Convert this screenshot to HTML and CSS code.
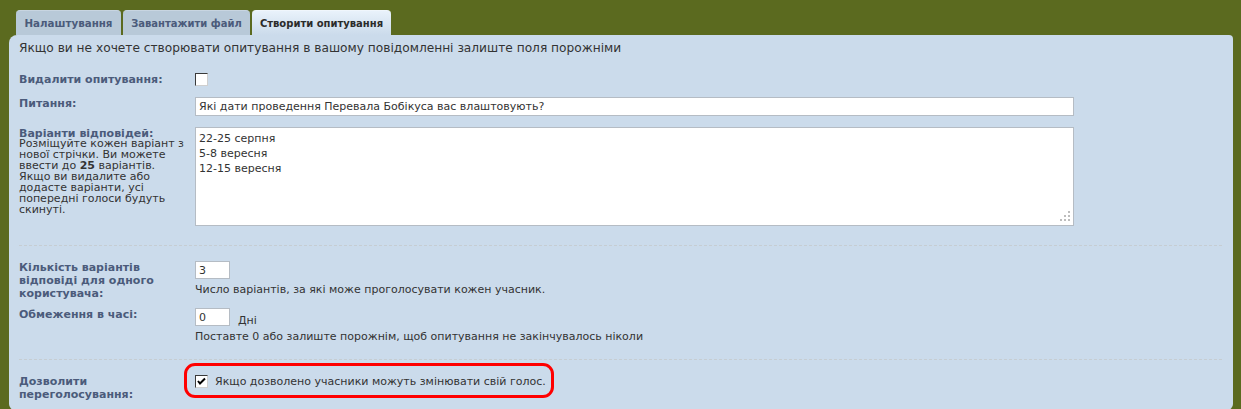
FILE: index.html
```html
<!DOCTYPE html>
<html lang="uk">
<head>
<meta charset="utf-8">
<title>Створити опитування</title>
<link rel="stylesheet" href="styles.css">
</head>
<body>
<div class="page">
  <nav class="tabs">
    <a class="tab t1">Налаштування</a>
    <a class="tab t2">Завантажити файл</a>
    <a class="tab t3 active">Створити опитування</a>
  </nav>
  <div class="panel">
    <p class="intro">Якщо ви не хочете створювати опитування в вашому повідомленні залиште поля порожніми</p>

    <div class="block first">
      <div class="row">
        <div class="label"><span class="ltext">Видалити опитування:</span></div>
        <div class="field"><span class="cb"></span></div>
      </div>
      <div class="row">
        <div class="label"><span class="ltext">Питання:</span></div>
        <div class="field"><input class="text wide" type="text" value="Які дати проведення Перевала Бобікуса вас влаштовують?"></div>
      </div>
      <div class="row">
        <div class="label">
          <span class="ltext">Варіанти відповідей:</span>
          <span class="explain">Розміщуйте кожен варіант з нової стрічки. Ви можете ввести до <b class="num">25</b> варіантів. Якщо ви видалите або додасте варіанти, усі попередні голоси будуть скинуті.</span>
        </div>
        <div class="field">
          <div class="ta-wrap">
            <textarea class="ta">22-25 серпня
5-8 вересня
12-15 вересня</textarea>
            <svg class="grip" width="11" height="11" viewBox="0 0 11 11"><g fill="#bdbdbd"><rect x="8" y="0" width="2" height="2"/><rect x="4" y="4" width="2" height="2"/><rect x="8" y="4" width="2" height="2"/><rect x="0" y="8" width="2" height="2"/><rect x="4" y="8" width="2" height="2"/><rect x="8" y="8" width="2" height="2"/></g></svg>
          </div>
        </div>
      </div>
    </div>

    <div class="block second">
      <div class="row">
        <div class="label"><span class="ltext">Кількість варіантів відповіді для одного користувача:</span></div>
        <div class="field">
          <input class="text small" type="text" value="3">
          <span class="help">Число варіантів, за які може проголосувати кожен учасник.</span>
        </div>
      </div>
      <div class="row">
        <div class="label"><span class="ltext">Обмеження в часі:</span></div>
        <div class="field">
          <div class="inline"><input class="text small" type="text" value="0"><span class="unit">Дні</span></div>
          <span class="help">Поставте 0 або залиште порожнім, щоб опитування не закінчувалось ніколи</span>
        </div>
      </div>
    </div>

    <div class="block third">
      <div class="row">
        <div class="label pad"><span class="ltext">Дозволити переголосування:</span></div>
        <div class="field">
          <label class="highlight"><span class="cb checked"><svg width="11" height="11" viewBox="0 0 11 11"><path d="M2 5 L4 7.5 L9 2.5" fill="none" stroke="#000" stroke-width="2"/></svg></span><span class="cbtext">Якщо дозволено учасники можуть змінювати свій голос.</span></label>
        </div>
      </div>
    </div>
  </div>
</div>
</body>
</html>
```
FILE: styles.css
```css
* { box-sizing: border-box; }
html, body { margin: 0; padding: 0; }
body {
  background: #5b6a1f;
  font-family: "DejaVu Sans", Verdana, sans-serif;
  color: #333;
  height: 409px;
  overflow: hidden;
}
.page { padding: 10px 8px 0 9px; }
.tabs { display: flex; gap: 2px; margin-left: 7px; height: 25px; }
.tab {
  display: flex; align-items: center; justify-content: center;
  height: 25px; padding: 0;
  background: #b8c9d8;
  border-top: 1px solid #c8d5e1;
  border-radius: 4px 4px 0 0;
  font-size: 10px; font-weight: bold; color: #4b5b7b;
  white-space: nowrap;
}
.tab.t1 { width: 105px; font-size: 10.3px; }
.tab.t2 { width: 127px; }
.tab.t3 { width: 139px; }
.tab.active {
  background: linear-gradient(#e9f2fb, #cbdbeb);
  border-top-color: #f0f6fc;
  color: #2b2b2b;
}
.panel {
  background: #cbdbeb;
  border-radius: 8px 4px 6px 6px;
  padding: 6px 11px 9px 10px;
}
.intro { margin: 0; font-size: 12.2px; line-height: 15px; color: #333; }
.block { display: flex; flex-direction: column; }
.block.first { margin-top: 17px; gap: 11px; padding-bottom: 19px; border-bottom: 1px dashed #c6cdd2; }
.block.second { padding-top: 15px; gap: 8px; padding-bottom: 16px; border-bottom: 1px dashed #c6cdd2; }
.block.third { padding-top: 3px; }
.row { display: flex; align-items: flex-start; }
.label { width: 176px; flex: none; padding-right: 8px; }
.label.pad { padding-top: 12px; }
.ltext { display: block; font-size: 11px; font-weight: bold; color: #4b5b7b; line-height: 13px; }
.explain { display: block; font-size: 11px; line-height: 11px; color: #333; margin-top: -2px; }
.explain .num { display: inline-block; font-weight: bold; line-height: 11px; height: 11px; }
.field { display: flex; flex-direction: column; align-items: flex-start; }
.cb {
  width: 13px; height: 13px; background: #fff;
  border: 1px solid; border-color: #3a3a3a #cfcfcf #cfcfcf #3a3a3a;
  display: flex; align-items: center; justify-content: center;
  flex: none;
}
.text {
  background: #fff; border: 1px solid #b5bcc4; margin: 0;
  font-family: "DejaVu Sans", Verdana, sans-serif; color: #333;
  padding: 0 3px; outline: none;
}
.text.wide { width: 879px; height: 19px; font-size: 11px; }
.text.small { width: 35px; height: 18px; font-size: 11px; }
.ta-wrap { position: relative; width: 879px; height: 99px; }
.ta {
  display: block; width: 879px; height: 99px; resize: none;
  background: #fff; border: 1px solid #b5bcc4; margin: 0;
  font-family: "DejaVu Sans", Verdana, sans-serif; font-size: 11px; line-height: 15px;
  color: #333; padding: 3px 3px; outline: none; overflow: hidden;
}
.grip { position: absolute; right: 3px; bottom: 4px; }
.help { display: block; font-size: 11px; line-height: 12px; margin-top: 5px; color: #333; }
.inline { display: flex; align-items: flex-end; }
.unit { font-size: 11px; margin-left: 8px; line-height: 13px; margin-bottom: -1px; }
.highlight {
  display: flex; align-items: center;
  margin-left: -11px;
  border: 3px solid #ff0000; border-radius: 11px;
  padding: 9px 5px 7px 8px;
}
.cbtext { font-size: 11px; margin-left: 7px; line-height: 13px; color: #333; }
```
